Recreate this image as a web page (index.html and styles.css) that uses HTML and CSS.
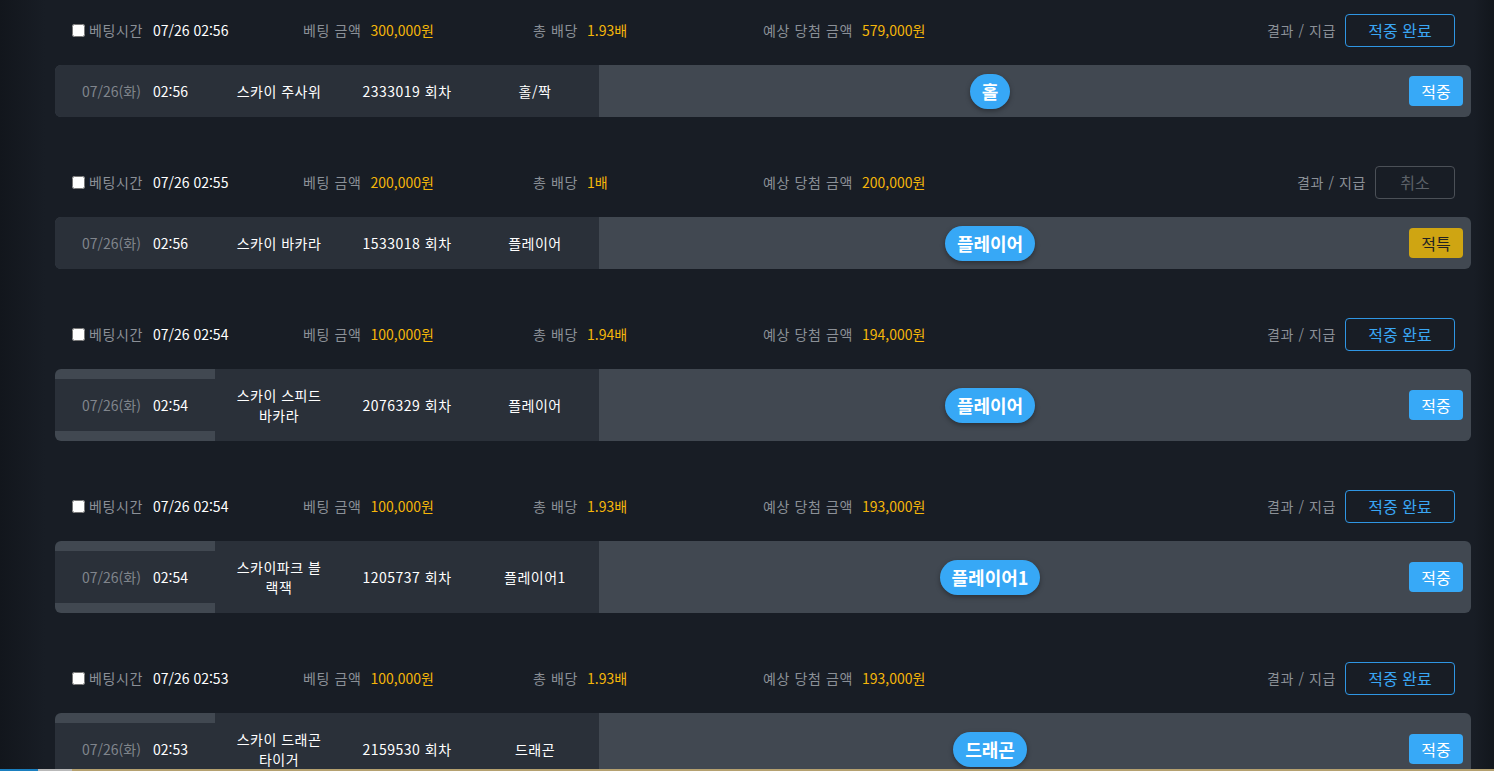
FILE: index.html
```html
<!DOCTYPE html>
<html lang="ko">
<head>
<meta charset="utf-8">
<title>베팅 내역</title>
<link rel="stylesheet" href="styles.css">
</head>
<body>
<div class="list">

  <section class="bet">
    <div class="bet-head">
      <div class="col col-time"><input type="checkbox" class="chk"><span class="lbl">베팅시간</span><span class="val">07/26 02:56</span></div>
      <div class="col"><span class="lbl">베팅 금액</span><span class="amt">300,000원</span></div>
      <div class="col"><span class="lbl">총 배당</span><span class="amt">1.93배</span></div>
      <div class="col col-win"><span class="lbl">예상 당첨 금액</span><span class="amt">579,000원</span></div>
      <div class="result"><span class="lbl">결과 / 지급</span><span class="btn btn-done">적중 완료</span></div>
    </div>
    <div class="bet-card">
      <div class="c-date"><div class="date-box"><span class="d">07/26(화)</span><span class="t">02:56</span></div></div>
      <div class="cell c-game">스카이 주사위</div>
      <div class="cell c-round">2333019 회차</div>
      <div class="cell c-pick">홀/짝</div>
      <div class="c-badge"><span class="badge">홀</span></div>
      <div class="c-res"><span class="res res-hit">적중</span></div>
    </div>
  </section>

  <section class="bet">
    <div class="bet-head">
      <div class="col col-time"><input type="checkbox" class="chk"><span class="lbl">베팅시간</span><span class="val">07/26 02:55</span></div>
      <div class="col"><span class="lbl">베팅 금액</span><span class="amt">200,000원</span></div>
      <div class="col"><span class="lbl">총 배당</span><span class="amt">1배</span></div>
      <div class="col col-win"><span class="lbl">예상 당첨 금액</span><span class="amt">200,000원</span></div>
      <div class="result"><span class="lbl">결과 / 지급</span><span class="btn btn-cancel">취소</span></div>
    </div>
    <div class="bet-card">
      <div class="c-date"><div class="date-box"><span class="d">07/26(화)</span><span class="t">02:56</span></div></div>
      <div class="cell c-game">스카이 바카라</div>
      <div class="cell c-round">1533018 회차</div>
      <div class="cell c-pick">플레이어</div>
      <div class="c-badge"><span class="badge">플레이어</span></div>
      <div class="c-res"><span class="res res-special">적특</span></div>
    </div>
  </section>

  <section class="bet">
    <div class="bet-head">
      <div class="col col-time"><input type="checkbox" class="chk"><span class="lbl">베팅시간</span><span class="val">07/26 02:54</span></div>
      <div class="col"><span class="lbl">베팅 금액</span><span class="amt">100,000원</span></div>
      <div class="col"><span class="lbl">총 배당</span><span class="amt">1.94배</span></div>
      <div class="col col-win"><span class="lbl">예상 당첨 금액</span><span class="amt">194,000원</span></div>
      <div class="result"><span class="lbl">결과 / 지급</span><span class="btn btn-done">적중 완료</span></div>
    </div>
    <div class="bet-card">
      <div class="c-date"><div class="date-box"><span class="d">07/26(화)</span><span class="t">02:54</span></div></div>
      <div class="cell c-game">스카이 스피드 바카라</div>
      <div class="cell c-round">2076329 회차</div>
      <div class="cell c-pick">플레이어</div>
      <div class="c-badge"><span class="badge">플레이어</span></div>
      <div class="c-res"><span class="res res-hit">적중</span></div>
    </div>
  </section>

  <section class="bet">
    <div class="bet-head">
      <div class="col col-time"><input type="checkbox" class="chk"><span class="lbl">베팅시간</span><span class="val">07/26 02:54</span></div>
      <div class="col"><span class="lbl">베팅 금액</span><span class="amt">100,000원</span></div>
      <div class="col"><span class="lbl">총 배당</span><span class="amt">1.93배</span></div>
      <div class="col col-win"><span class="lbl">예상 당첨 금액</span><span class="amt">193,000원</span></div>
      <div class="result"><span class="lbl">결과 / 지급</span><span class="btn btn-done">적중 완료</span></div>
    </div>
    <div class="bet-card">
      <div class="c-date"><div class="date-box"><span class="d">07/26(화)</span><span class="t">02:54</span></div></div>
      <div class="cell c-game">스카이파크 블랙잭</div>
      <div class="cell c-round">1205737 회차</div>
      <div class="cell c-pick">플레이어1</div>
      <div class="c-badge"><span class="badge">플레이어1</span></div>
      <div class="c-res"><span class="res res-hit">적중</span></div>
    </div>
  </section>

  <section class="bet">
    <div class="bet-head">
      <div class="col col-time"><input type="checkbox" class="chk"><span class="lbl">베팅시간</span><span class="val">07/26 02:53</span></div>
      <div class="col"><span class="lbl">베팅 금액</span><span class="amt">100,000원</span></div>
      <div class="col"><span class="lbl">총 배당</span><span class="amt">1.93배</span></div>
      <div class="col col-win"><span class="lbl">예상 당첨 금액</span><span class="amt">193,000원</span></div>
      <div class="result"><span class="lbl">결과 / 지급</span><span class="btn btn-done">적중 완료</span></div>
    </div>
    <div class="bet-card">
      <div class="c-date"><div class="date-box"><span class="d">07/26(화)</span><span class="t">02:53</span></div></div>
      <div class="cell c-game">스카이 드래곤 타이거</div>
      <div class="cell c-round">2159530 회차</div>
      <div class="cell c-pick">드래곤</div>
      <div class="c-badge"><span class="badge">드래곤</span></div>
      <div class="c-res"><span class="res res-hit">적중</span></div>
    </div>
  </section>

</div>
<div class="taskbar">
  <span class="tb tb-blue"></span><span class="tb tb-gray"></span><span class="tb tb-tan"></span>
</div>
</body>
</html>
```

FILE: styles.css
```css
html, body {
  margin: 0;
  padding: 0;
  height: 771px;
  overflow: hidden;
}

body {
  font-family: "Noto Sans CJK KR", "Noto Sans", sans-serif;
  font-size: 14px;
  color: #ffffff;
  background: linear-gradient(to right, #12161c 0, #181d25 45px, #181d25 1474px, #12161c 1494px);
}

.list {
  margin-left: 55px;
  width: 1416px;
  padding-top: 10px;
}

.bet {
  margin-bottom: 45px;
}

.bet-head {
  display: flex;
  align-items: center;
  height: 40px;
  padding-left: 17px;
  padding-right: 16px;
  margin-bottom: 15px;
  white-space: nowrap;
}

.col {
  display: flex;
  align-items: center;
  width: 230px;
  flex: none;
}

.col-time {
  width: 231px;
}

.col-win {
  width: auto;
}

.chk {
  width: 13px;
  height: 13px;
  margin: 0 4px 0 0;
}

.lbl {
  color: #8b9097;
  letter-spacing: 0.6px;
}

.val {
  margin-left: 10px;
  color: #ffffff;
}

.amt {
  margin-left: 9px;
  color: #f5b60a;
}

.result {
  margin-left: auto;
  display: flex;
  align-items: center;
}

.btn {
  margin-left: 9px;
  height: 33px;
  box-sizing: border-box;
  display: flex;
  align-items: center;
  justify-content: center;
  border-radius: 4px;
  font-size: 16px;
}

.btn-done {
  width: 110px;
  border: 1px solid #2f96e4;
  color: #3aa7f4;
}

.btn-cancel {
  margin-left: 9px;
  width: 80px;
  border: 1px solid #4b5057;
  color: #5c6168;
}

.bet-card {
  display: flex;
  align-items: stretch;
  min-height: 52px;
  background: #414851;
  border-radius: 6px;
  overflow: hidden;
}

.c-date {
  width: 160px;
  flex: none;
  display: flex;
  align-items: center;
}

.date-box {
  width: 100%;
  height: 52px;
  background: #2a3039;
  display: flex;
  align-items: center;
  justify-content: center;
  gap: 12px;
}

.d {
  color: #80858c;
}

.t {
  color: #ffffff;
}

.cell {
  width: 128px;
  flex: none;
  box-sizing: border-box;
  padding: 16px 16px;
  background: #2a3039;
  display: flex;
  align-items: center;
  justify-content: center;
  text-align: center;
  line-height: 20px;
  letter-spacing: 0.5px;
}

.c-badge {
  flex: 1;
  display: flex;
  align-items: center;
  justify-content: center;
}

.badge {
  height: 35px;
  padding: 0 12px;
  min-width: 16px;
  display: flex;
  align-items: center;
  justify-content: center;
  border-radius: 18px;
  background: #37a8f6;
  color: #ffffff;
  font-size: 18px;
  font-weight: 700;
  box-shadow: 0 2px 5px rgba(0, 0, 0, 0.35);
}

.c-res {
  width: 90px;
  flex: none;
  display: flex;
  align-items: center;
  justify-content: flex-end;
  padding-right: 8px;
  box-sizing: border-box;
}

.res {
  width: 54px;
  height: 30px;
  display: flex;
  align-items: center;
  justify-content: center;
  border-radius: 4px;
  font-size: 16px;
}

.res-hit {
  background: #37a9f7;
  color: #ffffff;
}

.res-special {
  background: #cfa512;
  color: #222222;
}

.taskbar {
  position: fixed;
  left: 0;
  right: 0;
  bottom: 0;
  height: 2px;
  display: flex;
}

.tb-blue {
  width: 38px;
  background: #1a7fbf;
}

.tb-gray {
  width: 34px;
  background: #b9b9b9;
}

.tb-tan {
  flex: 1;
  background: #b5a170;
}
```
